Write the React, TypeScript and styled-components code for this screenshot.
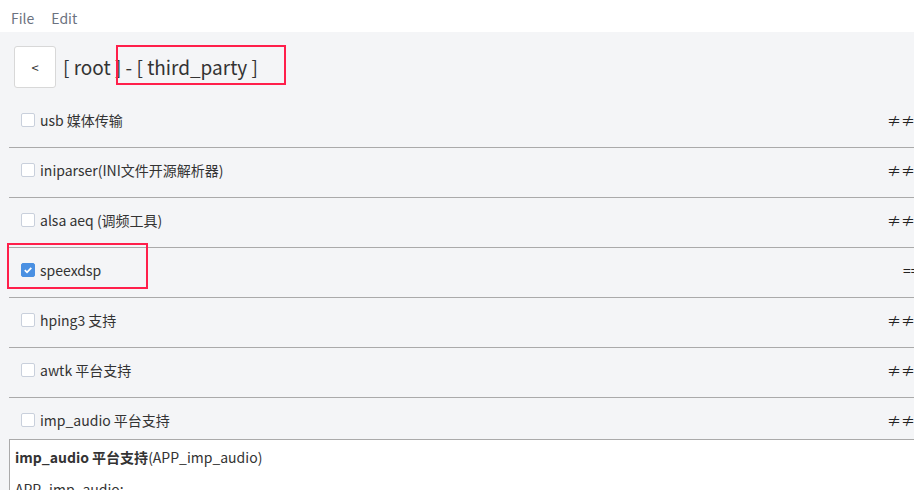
import React from "react";
import styled, { createGlobalStyle } from "styled-components";

const Global = createGlobalStyle`
  html, body { margin: 0; padding: 0; }
  body {
    background: #f4f5f7;
    overflow: hidden;
    font-family: "Noto Sans CJK SC", "Noto Sans", sans-serif;
    color: #333;
  }
`;

const Page = styled.div`
  position: relative;
  width: 914px;
  height: 490px;
  display: flex;
  flex-direction: column;
  overflow: hidden;
`;

const MenuBar = styled.div`
  flex: none;
  height: 32px;
  box-sizing: border-box;
  padding-top: 3px;
  background: #fff;
  display: flex;
  align-items: center;
  gap: 17px;
  padding-left: 11px;
  font-size: 14px;
  color: #6b7280;
`;

const Header = styled.div`
  flex: none;
  display: flex;
  align-items: center;
  gap: 7px;
  padding: 14px 0 11px 14px;
`;

const BackButton = styled.button`
  width: 42px;
  height: 42px;
  background: #fff;
  border: 1px solid #d8d8d8;
  border-radius: 3px;
  font-family: inherit;
  font-size: 13px;
  color: #333;
  padding: 0;
`;

const Crumbs = styled.div`
  font-size: 19px;
  color: #333;
  white-space: pre;
  margin-top: -1px;
`;

const List = styled.div`
  flex: none;
  height: 340px;
  overflow: hidden;
  margin-left: 9px;
`;

const Row = styled.div`
  height: 49px;
  box-sizing: border-box;
  border-bottom: 1px solid #aaa;
  display: flex;
  align-items: center;
  padding-left: 12px;
  padding-bottom: 7px;
  margin-bottom: 1px;
  font-size: 14px;
  color: #333;
`;

const Check = styled.span<{ $on?: boolean }>`
  width: 14px;
  height: 14px;
  box-sizing: border-box;
  border: 1px solid ${(p) => (p.$on ? "#4a90e2" : "#c9d0dc")};
  background: ${(p) => (p.$on ? "#4a90e2" : "#fff")};
  border-radius: 2px;
  display: inline-flex;
  align-items: center;
  justify-content: center;
  margin-right: 5px;
  flex: none;
`;

const Label = styled.span`
  flex: 1;
`;

const Mark = styled.span<{ $same?: boolean }>`
  flex: none;
  box-sizing: border-box;
  width: 27px;
  font-size: 14px;
  color: #222;
  padding-left: ${(p) => (p.$same ? "16px" : "0")};
  white-space: nowrap;
`;

const Detail = styled.div`
  flex: 1;
  margin-left: 9px;
  margin-right: -10px;
  background: #fff;
  border: 1px solid #aaa;
  padding: 6px 5px;
  font-size: 14px;
  color: #333;
`;

const DetailLine = styled.div`
  margin-bottom: 10px;
  line-height: 22px;
`;

const Annot = styled.div`
  position: absolute;
  border: 2px solid #ff1f4b;
  box-sizing: border-box;
  pointer-events: none;
`;

const rows = [
  { label: "usb 媒体传输", on: false, same: false },
  { label: "iniparser(INI文件开源解析器)", on: false, same: false },
  { label: "alsa aeq (调频工具)", on: false, same: false },
  { label: "speexdsp", on: true, same: true },
  { label: "hping3 支持", on: false, same: false },
  { label: "awtk 平台支持", on: false, same: false },
  { label: "imp_audio 平台支持", on: false, same: false },
];

export default function App() {
  return (
    <Page>
      <Global />
      <MenuBar>
        <span>File</span>
        <span>Edit</span>
      </MenuBar>
      <Header>
        <BackButton>&lt;</BackButton>
        <Crumbs>[ root ] - [ third_party ]</Crumbs>
      </Header>
      <List>
        {rows.map((r) => (
          <Row key={r.label}>
            <Check $on={r.on}>
              {r.on && (
                <svg width="10" height="10" viewBox="0 0 10 10">
                  <path d="M1.8 5.2 L4 7.3 L8.3 2.8" fill="none" stroke="#fff" strokeWidth="1.8" />
                </svg>
              )}
            </Check>
            <Label>{r.label}</Label>
            <Mark $same={r.same}>{r.same ? "==" : "≠≠"}</Mark>
          </Row>
        ))}
      </List>
      <Detail>
        <DetailLine>
          <b>imp_audio 平台支持</b>(APP_imp_audio)
        </DetailLine>
        <DetailLine>APP_imp_audio:</DetailLine>
      </Detail>
      <Annot style={{ left: 116, top: 45, width: 170, height: 40 }} />
      <Annot style={{ left: 7, top: 243, width: 141, height: 46 }} />
    </Page>
  );
}
